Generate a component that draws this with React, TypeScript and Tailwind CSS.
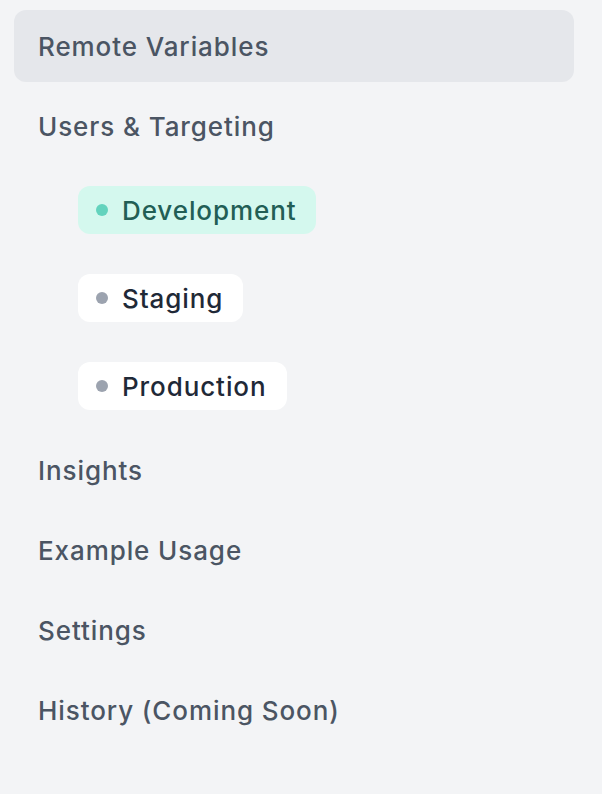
const navTop = ['Remote Variables', 'Users & Targeting'];
const navBottom = ['Insights', 'Example Usage', 'Settings', 'History (Coming Soon)'];

const environments = [
  { name: 'Development', active: true },
  { name: 'Staging', active: false },
  { name: 'Production', active: false },
];

function NavItem({ label, active }: { label: string; active?: boolean }) {
  return (
    <div
      className={`flex h-[72px] items-center rounded-xl px-6 text-[26px] font-medium tracking-[0.035em] text-[#4b5563] ${
        active ? 'bg-[#e5e7eb]' : ''
      }`}
    >
      {label}
    </div>
  );
}

export default function App() {
  return (
    <div
      className="min-h-[794px] w-[602px] bg-[#f3f4f6] pl-[14px] pr-[28px] pt-[10px]"
      style={{ fontFamily: 'Inter, "Noto Sans", sans-serif' }}
    >
      <div className="flex flex-col gap-2">
        <NavItem label={navTop[0]} active />
        <NavItem label={navTop[1]} />
      </div>

      {/* Environments */}
      <div className="my-6 flex flex-col items-start gap-10 pl-16">
        {environments.map((env) => (
          <div
            key={env.name}
            className={`flex h-12 items-center gap-[14px] rounded-xl pl-[18px] pr-5 text-[26px] font-medium tracking-[0.035em] ${
              env.active ? 'bg-[#d4f8ee] text-[#225e55]' : 'bg-white text-[#1f2937]'
            }`}
          >
            <span
              className={`h-3 w-3 shrink-0 rounded-full ${env.active ? 'bg-[#63d3bd]' : 'bg-[#9ca3af]'}`}
            />
            {env.name}
          </div>
        ))}
      </div>

      <div className="flex flex-col gap-2">
        {navBottom.map((label) => (
          <NavItem key={label} label={label} />
        ))}
      </div>
    </div>
  );
}
